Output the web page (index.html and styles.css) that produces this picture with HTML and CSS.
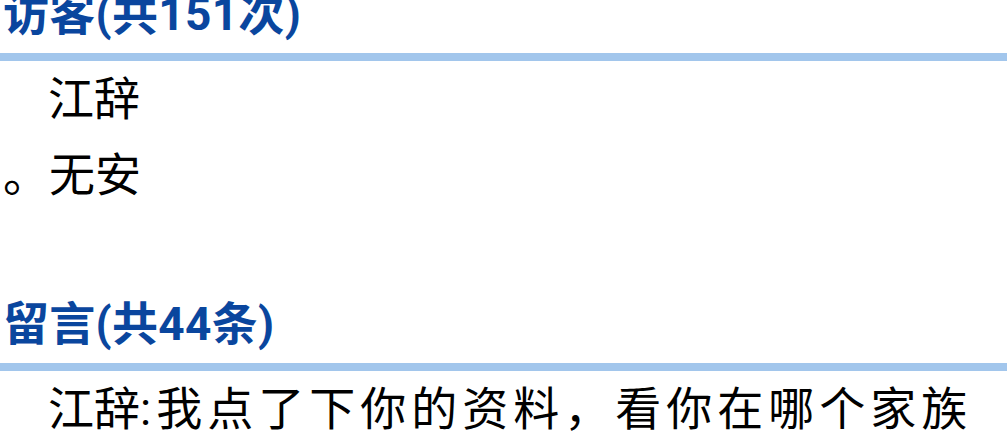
FILE: index.html
```html
<!DOCTYPE html>
<html lang="zh-CN">

<head>
    <meta charset="UTF-8">
    <meta name="viewport" content="width=device-width, initial-scale=1.0">
    <title>访客与留言</title>
    <link rel="stylesheet" href="styles.css">
</head>

<body>
    <main class="page">
        <section class="visitors">
            <h2 class="section-title">访客(共151次)</h2>
            <ul class="visitor-list">
                <li>江辞</li>
                <li class="with-dot">。无安</li>
            </ul>
        </section>

        <section class="messages">
            <h2 class="section-title">留言(共44条)</h2>
            <ul class="message-list">
                <li><span class="author">江辞:</span><span class="message-text">我点了下你的资料，看你在哪个家族里面，想问问你们家族还收人吗</span></li>
            </ul>
        </section>
    </main>
</body>

</html>
```

FILE: styles.css
```css
body {
    margin: 0;
    padding: 0;
    background-color: #fff;
    color: #000;
    font-family: Roboto, "Noto Sans CJK SC", sans-serif;
    font-size: 46px;
}

.page {
    margin-top: -9px;
}

.section-title {
    margin: 0;
    padding: 0 0 16px 3px;
    font-size: 46px;
    line-height: 46px;
    font-weight: bold;
    letter-spacing: 0.3px;
    color: #0a469e;
    border-bottom: 8px solid #a2c6ec;
}

.visitor-list,
.message-list {
    list-style: none;
    margin: 0;
    padding: 0 20px 0 48px;
    line-height: 76px;
}

.visitor-list {
    margin-bottom: 88px;
}

/* the full stop hangs into the left padding */
.visitor-list .with-dot {
    text-indent: -45px;
}

.author {
    margin-right: 5px;
}

.message-text {
    letter-spacing: 5px;
}
```
